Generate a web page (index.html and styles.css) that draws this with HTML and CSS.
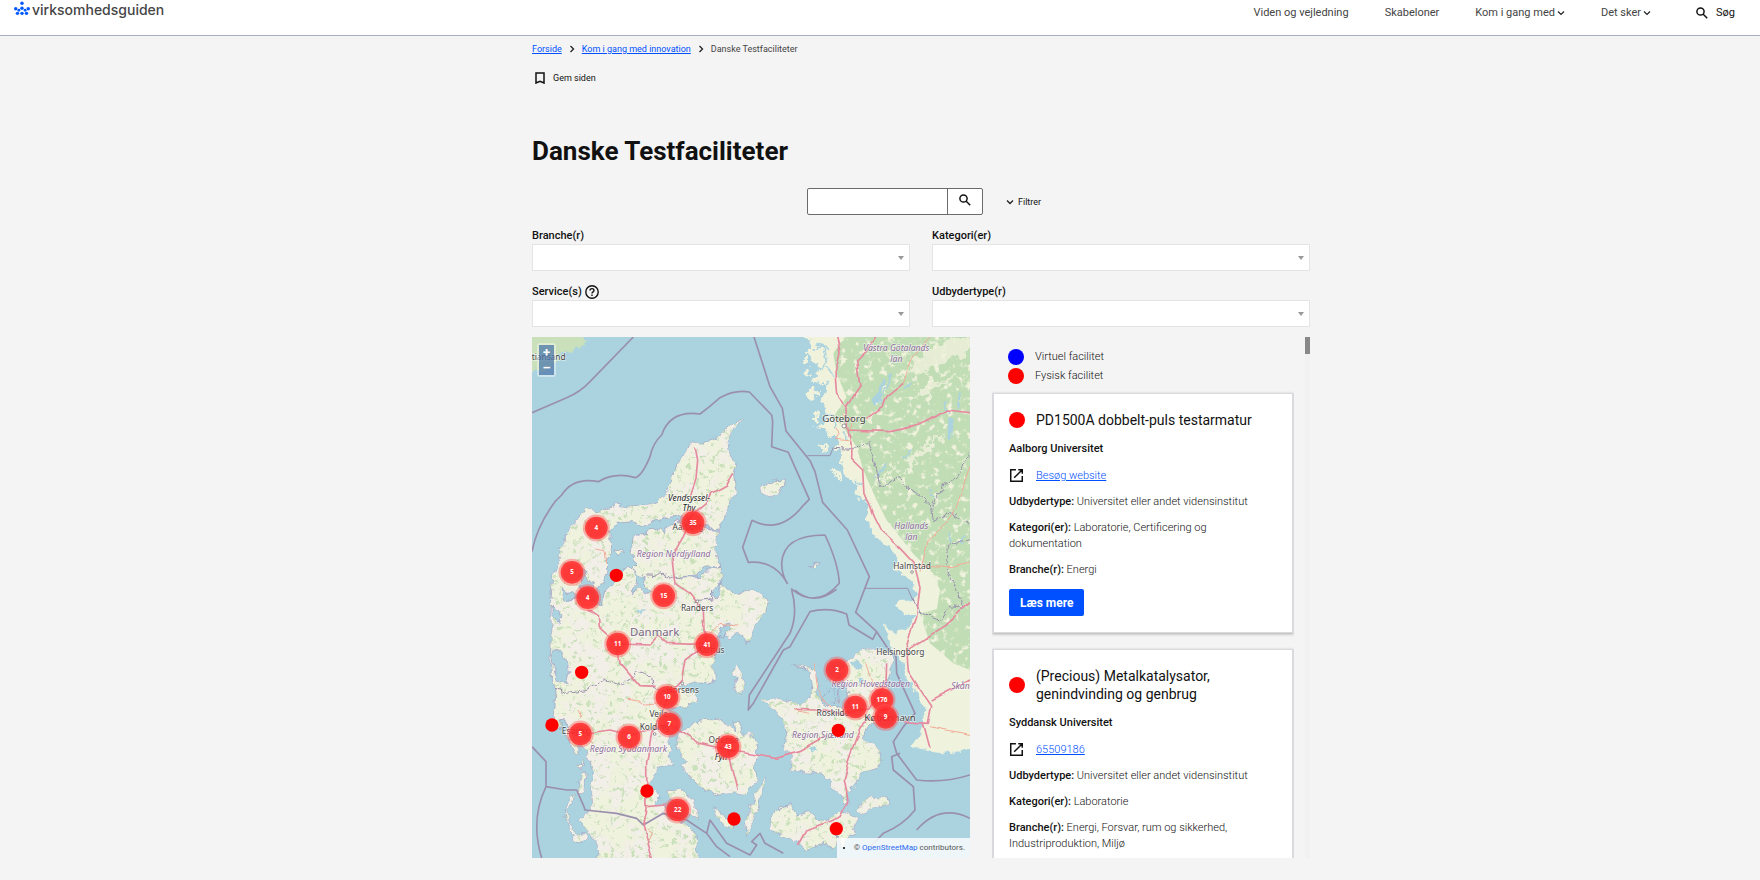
FILE: index.html
```html
<!DOCTYPE html>
<html lang="da">
<head>
<meta charset="utf-8">
<meta name="viewport" content="width=device-width, initial-scale=1">
<title>Danske Testfaciliteter</title>
<link rel="stylesheet" href="styles.css">
</head>
<body>
<header class="site-header">
  <a class="logo" href="#">
    <svg class="logo-mark" viewBox="0 0 46 42" aria-hidden="true"><circle cx="23" cy="6" r="5"/><circle cx="23" cy="20" r="5"/><circle cx="5" cy="22" r="5"/><circle cx="41" cy="22" r="5"/><circle cx="14" cy="26" r="4"/><circle cx="32" cy="26" r="4"/><circle cx="10" cy="35" r="5"/><circle cx="23" cy="35" r="5"/><circle cx="36" cy="35" r="5"/></svg>
    <span>virksomhedsguiden</span>
  </a>
  <nav class="main-nav">
    <a href="#">Viden og vejledning</a>
    <a href="#">Skabeloner</a>
    <button type="button">Kom i gang med <svg class="chev" viewBox="0 0 8 8"><path d="M1 2.5l3 3 3-3"/></svg></button>
    <button type="button">Det sker <svg class="chev" viewBox="0 0 8 8"><path d="M1 2.5l3 3 3-3"/></svg></button>
    <button type="button" class="nav-search"><svg class="lens" viewBox="0 0 12 12"><circle cx="4.5" cy="4.5" r="3.6"/><path d="M7.2 7.2l4 4"/></svg>Søg</button>
  </nav>
</header>

<main class="page">
  <div class="content">
    <nav class="breadcrumb" aria-label="Brødkrumme">
      <a href="#">Forside</a>
      <svg class="chev" viewBox="0 0 8 8"><path d="M2.5 1l3 3-3 3"/></svg>
      <a href="#">Kom i gang med innovation</a>
      <svg class="chev" viewBox="0 0 8 8"><path d="M2.5 1l3 3-3 3"/></svg>
      <span>Danske Testfaciliteter</span>
    </nav>
    <button type="button" class="save"><svg viewBox="0 0 10 12"><path d="M1 1h8v10L5 9.200 1 11z"/></svg>Gem siden</button>
    <h1>Danske Testfaciliteter</h1>

    <form class="search-row">
      <div class="search-box">
        <input type="search" aria-label="Søg i testfaciliteter">
        <button type="button" aria-label="Søg"><svg class="lens" viewBox="0 0 12 12"><circle cx="4.500" cy="4.500" r="3.600"/><path d="M7.200 7.200l4 4"/></svg></button>
      </div>
      <button type="button" class="filter-toggle"><svg class="chev" viewBox="0 0 8 8"><path d="M1 2.500l3 3 3-3"/></svg>Filtrer</button>
    </form>

    <div class="filters">
      <div class="field"><label for="branche">Branche(r)</label><div class="select"><select id="branche"><option></option></select></div></div>
      <div class="field"><label for="kategori">Kategori(er)</label><div class="select"><select id="kategori"><option></option></select></div></div>
      <div class="field"><label for="service">Service(s) <svg class="help" viewBox="0 0 14 14"><circle cx="7" cy="7" r="6.200"/><path d="M5 5.600C5 4.200 6 3.600 7 3.600s2 .7 2 1.800C9 6.900 7 6.900 7 8.500M7 9.600v1.300"/></svg></label><div class="select"><select id="service"><option></option></select></div></div>
      <div class="field"><label for="udbyder">Udbydertype(r)</label><div class="select"><select id="udbyder"><option></option></select></div></div>
    </div>

    <div class="results">
      <section class="map" aria-label="Kort">
        <svg class="map-canvas" viewBox="36 21 1314 1563" preserveAspectRatio="xMidYMid slice">
          <defs>
            <filter id="woods" x="0" y="0" width="100%" height="100%" color-interpolation-filters="sRGB">
              <feTurbulence type="fractalNoise" baseFrequency=".05" numOctaves="5" seed="8"/>
              <feColorMatrix values="0 0 0 0 .757  0 0 0 0 .867  0 0 0 0 .71  6 0 0 0 -1.600" result="n"/>
              <feComposite in="n" in2="SourceGraphic" operator="in"/>
            </filter>
            <filter id="fields" x="0" y="0" width="100%" height="100%" color-interpolation-filters="sRGB">
              <feTurbulence type="fractalNoise" baseFrequency=".07" numOctaves="4" seed="21"/>
              <feColorMatrix values="0 0 0 0 .79  0 0 0 0 .88  0 0 0 0 .73  8 0 0 0 -4.700" result="n"/>
              <feComposite in="n" in2="SourceGraphic" operator="in"/>
            </filter>
            <filter id="soil" x="0" y="0" width="100%" height="100%" color-interpolation-filters="sRGB">
              <feTurbulence type="fractalNoise" baseFrequency=".015" numOctaves="4" seed="4"/>
              <feColorMatrix values="0 0 0 0 .949  0 0 0 0 .933  0 0 0 0 .91  0 5 0 0 -2.200" result="n"/>
              <feComposite in="n" in2="SourceGraphic" operator="in"/>
            </filter>
            <filter id="coast" filterUnits="userSpaceOnUse" x="-20" y="-20" width="1420" height="1660" color-interpolation-filters="sRGB">
              <feTurbulence type="fractalNoise" baseFrequency=".04" numOctaves="3" seed="3"/>
              <feDisplacementMap in="SourceGraphic" scale="24" xChannelSelector="R" yChannelSelector="G"/>
            </filter>
            <filter id="wander" filterUnits="userSpaceOnUse" x="-20" y="-20" width="1420" height="1660" color-interpolation-filters="sRGB">
              <feTurbulence type="fractalNoise" baseFrequency=".02" numOctaves="1" seed="3"/>
              <feDisplacementMap in="SourceGraphic" scale="20" xChannelSelector="R" yChannelSelector="G"/>
            </filter>
            <filter id="skerries" filterUnits="userSpaceOnUse" x="-20" y="-20" width="1420" height="1660" color-interpolation-filters="sRGB">
              <feTurbulence type="fractalNoise" baseFrequency=".035" numOctaves="4" seed="11"/>
              <feDisplacementMap in="SourceGraphic" scale="60" xChannelSelector="R" yChannelSelector="G"/>
            </filter>
            <path id="denmark" d="M672 268L650 290 632 308 622 340 630 375 650 402 641 430 645 470 648 495 625 530 610 570 600 597 587 620 585 650 592 690 604 710 604 740 600 755 620 780 660 790 700 782 725 790 740 820 738 850 708 880 695 910 684 944 668 915 652 910 630 925 605 915 612 900 638 886 622 884 600 900 585 920 574 950 586 975 581 1010 582 1050 545 1062 500 1063 478 1073 528 1088 532 1110 500 1130 460 1136 420 1125 452 1150 475 1180 470 1200 448 1215 445 1230 456 1258 440 1285 458 1302 420 1315 400 1340 385 1370 402 1378 420 1400 405 1420 435 1430 430 1455 470 1470 505 1480 522 1505 532 1530 530 1590 228 1590 240 1560 200 1500 178 1470 200 1450 215 1430 213 1380 220 1320 205 1280 190 1255 168 1235 175 1272 160 1265 150 1240 140 1210 128 1172 112 1195 95 1180 105 1130 108 1080 94 1040 92 960 96 900 92 840 95 780 98 740 116 690 125 645 140 610 170 570 200 535 232 546 290 524 340 531 400 520 430 497 460 440 478 388 506 348 515 336 550 340 590 320 630 290zM475 1215L490 1200 540 1170 590 1165 622 1180 650 1212 638 1175 662 1180 666 1222 690 1210 712 1240 704 1300 710 1350 680 1392 640 1388 590 1396 540 1370 508 1340 486 1312 502 1292 470 1260zM445 1380L475 1377 507 1400 532 1440 536 1465 500 1450 480 1430 448 1403zM578 1432L620 1462 645 1494 600 1472zM740 1345L724 1394 702 1460 680 1518 675 1480 698 1420 712 1376zM650 1005L666 1030 672 1070 655 1098 645 1080 652 1040 641 1020zM725 1110L770 1105 810 1116 862 1122 876 1085 872 1030 815 1003 882 1020 895 1050 890 1090 918 1128 950 1120 960 1072 925 1050 950 1022 990 990 1030 957 1060 955 1110 970 1120 992 1102 1040 1106 1090 1120 1130 1106 1155 1070 1170 1045 1190 1026 1222 1060 1240 1085 1275 1076 1310 1030 1325 1012 1348 1000 1372 980 1385 986 1425 972 1422 970 1400 940 1380 930 1350 900 1328 860 1325 812 1320 815 1280 790 1250 800 1210 790 1170 752 1130zM1010 1440L1050 1398 1062 1412 1100 1400 1106 1424 1062 1430 1024 1455zM920 1480L960 1440 986 1455 1016 1466 990 1520 962 1556 950 1510zM755 1460L780 1430 812 1424 835 1455 870 1445 890 1472 930 1470 952 1520 945 1550 900 1545 860 1562 820 1530 770 1510 748 1492zM720 475L745 455 795 450 797 464 772 482 757 503 730 486zM868 710L902 699 885 718zM150 1400L165 1395 140 1440 150 1490 170 1510 185 1530 150 1500 132 1450zM160 1515L195 1508 203 1525 180 1540 158 1530zM180 1330L196 1325 190 1380 175 1388zM172 1310L192 1290 185 1315z"/>
            <path id="sweden-north" d="M1400 0L850 0 875 50 850 85 895 110 885 150 920 170 898 212 925 240 905 290 935 320 960 352 970 430 990 440 1010 480 1035 520 1045 570 1065 620 1400 620z"/>
            <path id="sweden-south" d="M1400 560L1047 575 1065 620 1110 650 1132 680 1125 720 1170 745 1192 800 1180 815 1142 815 1125 828 1150 850 1190 862 1160 890 1130 912 1087 880 1105 930 1125 970 1150 995 1160 1040 1190 1090 1216 1135 1208 1180 1195 1225 1168 1250 1230 1262 1300 1272 1400 1240z"/>
          </defs>
          <rect width="1500" height="1700" fill="#aad3df"/>
          <g filter="url(#skerries)">
            <use href="#sweden-north" fill="#f0f2dc"/>
            <path fill="#c9e0bb" d="M0 0h215l-28 36-50 36-42 40-95 30z"/>
            <path fill="#f0f2dc" d="M858 120l14-8 6 20-12 8zM868 180l16-5 2 22-14 4zM880 255l14 0 4 26-14 0zM905 340l14 4 2 20-14 0zM940 420l12 0 2 22-12 0z"/>
          </g>
          <g filter="url(#coast)">
            <g fill="#eff2dd" stroke="#9d9ac0" stroke-width="2">
              <use href="#denmark"/>
              <use href="#sweden-south" stroke="none"/>
            </g>
            <use href="#denmark" filter="url(#soil)"/>
            <use href="#denmark" filter="url(#fields)"/>
            <!-- fjords and lakes -->
            <g fill="#aad3df" stroke="#9d9ac0" stroke-width="2">
              <path d="M272 600l20-20 45-5 25 15 30-15 55-10 25-8 20 10 25 5 25 10 30 15 32-4-12 8-28-2-50-20-45-5-25 10-8 30-12-20-35 2-20 18-28 2-8 45 12 12 5 30-15 15 20 20 20 10-5 20 20 20-15 10-20-25-25 20 20-40-10-30-15-10-25 10-15 30-30 25-10 50-35-20-45-5-30 10-8-45 15 25 40-5-5-50 10-15 15 0-8 20 25 15 0 25 30-25 15-40-5-35 15-15 0-20z"/>
              <path d="M478 742l50-8 25-22 50-3-45 12-20 18zM575 790l30-35-15 55zM97 960l25 5 15 30 12 30-15 35-22-10-15-45zM120 1170l15 3 5 30-20-5zM96 825l15 15 15 20-8 15-22-25zM602 890l30-8 5 15-20 10-5 20-15-5z"/>
              <path d="M905 1105l15-25 25-10 0 25-10 25 20 0 5-60-15-5 8-30 20 30 10 30 8 35-20 15-40-5z"/>
              <path stroke="none" d="M995 1000l15-8 15 15-15 12zM350 840l20-3-10 12zM870 1255l12-8 8 12-12 10zM1020 1040l14 12-18 8z"/>
            </g>
            <g fill="#eff2dd" stroke="#9d9ac0" stroke-width="2"><path d="M285 660l25-6 3 12-20 8z"/></g>
          </g>
          <g filter="url(#woods)"><path d="M1350 21H970l-30 50 10 60 30 70-40 60 30 30 40 60 20 70 40 90 30 60 80 100 60 60 20 50-10 60 60 60 110 40z"/><path d="M1200 850l80-20 70 10v180l-50-20-70-60z"/></g>
          <path filter="url(#skerries)" d="M1240 40l120-30v50l-170 70-50 20zM1360 125l-110 45-90 45 60-50zM1290 300l-80 70-70 80 40-80zM1120 410l-20 70-15-20z" fill="#f0f2dc" opacity=".8"/>
          <g filter="url(#coast)" stroke="#aad3df" stroke-width="5" fill="none"><path d="M875 60l30-10 20 40-20 30M905 170l25-20M900 260l35-5 10 40M890 40l40 20M920 110l25 30M1120 130l-30 60M1150 180l25-20M1320 190l-8 50M1270 215l20 40M1060 450l40-50M1230 480l15 20M970 300l12 30M1010 500l30 10M1010 450l20 20M1290 610v30M1325 610l5 35M1150 380l25-15"/><path stroke-width="12" d="M1090 150l-15 50-15 25M1295 270l-5 60M1060 215l30-5"/></g>

          <!-- maritime and administrative borders -->
          <g fill="none" stroke="#9a90ae" stroke-width="5" stroke-linejoin="round">
            <path d="M340 21L210 155Q180 187 140 203L36 248M36 665Q50 590 105 515L125 495Q160 440 235 455 285 425 345 443 365 440 390 380 398 340 425 315 450 240 540 252 570 230 600 203 645 178 688 186L755 255 758 275 755 350 805 367 868 508 850 526Q780 615 696 571L668 652 685 697Q765 690 803 762M702 21L750 170 787 235 798 303 870 392 885 425 908 517 982 600 1048 740 1007 847 1070 905 1058 928 987 885 980 852Q925 830 870 845L810 950 790 960 700 1120 685 1140 688 1095 810 910Q835 850 815 780M915 615Q790 615 785 700 785 735 803 762M915 615Q955 700 958 760 890 840 813 776M825 780Q880 830 950 778M1070 905L1100 950 1128 980 1130 1030 1185 1150 1150 1190 1120 1235 1130 1270 1190 1350Q1270 1360 1350 1335M1140 1270L1115 1280 1120 1320 1180 1370 1185 1440Q1150 1485 1090 1510L1040 1560M1350 1465Q1260 1420 1190 1500"/>
            <path d="M36 1250L78 1295V1370L140 1380 170 1380 192 1430 195 1440 290 1450 350 1465 370 1485 430 1450 500 1470 560 1510 590 1550 630 1580M78 1370Q30 1470 65 1584M560 1510L570 1470 620 1540 690 1575 710 1545 695 1535 720 1510 735 1540 790 1570"/>
            <path filter="url(#coast)" stroke-width="3" d="M105 1075L150 1090 200 1080 250 1050 310 1070 345 1025 395 1040 400 1070 440 1090M365 735L400 740 420 725 450 745 480 745M520 815L575 810V780M940 352L1000 355 1045 338 1060 370 1080 470 1130 445 1190 490 1235 530 1240 575 1290 545 1350 585M1235 530L1260 480 1310 440 1350 370M1178 810L1200 850 1260 870 1290 830 1330 835 1315 790 1280 715 1285 645 1350 632"/>
            <path stroke-width="3" d="M862 377H930L940 352M1035 775H1163L1178 810"/>
          </g>
          <!-- roads -->
          <g filter="url(#wander)" fill="none" stroke="#e58a9f" stroke-width="5" stroke-linejoin="round">
            <path d="M525 350L533 390 528 445 510 500M641 430L620 465 575 490 560 520 519 555 490 620 455 680 465 760 510 790 550 840 552 900 560 940 495 990 485 1050 440 1100 430 1150 395 1210 380 1300 381 1440 370 1490 400 1600M203 840L232 860 235 890 293 942 390 945 415 920 440 940 560 944M293 950L300 1000 360 1070 410 1072M181 1212L270 1200 330 1215 400 1200 448 1182 540 1240 624 1260 710 1275 765 1285 840 1265 920 1220M624 1260L655 1380M381 1430L440 1425"/>
            <path d="M948 1L960 70 945 130 950 190 981 228 982 290 993 340 992 385 1028 420 1032 490 1060 560 1080 600 1140 655 1182 700 1200 770 1190 860 1160 960 1165 1020 1210 1090 1235 1125 1225 1180 1150 1175M981 228L1020 170 1010 90 1040 60 1080 1M1040 265L1090 230 1100 200 1150 160M985 300L1110 305 1180 290 1230 270 1280 240 1370 250M1160 965L1270 890 1370 800M1235 1110L1370 1040M1210 1180L1230 1255M820 1138L890 1140 960 1150 1050 1140 1098 1060 1100 1000M1050 1160L1020 1190 985 1290 970 1350 982 1420 960 1460 860 1500 835 1545"/>
            <path stroke="#f2ab96" stroke-width="3" d="M1150 160L1180 80 1250 1M1200 725L1225 630 1290 570 1370 360M1200 705L1290 710 1370 693M320 1105L360 1110 380 1125 420 1120M180 1140L188 1165M550 930L600 880 655 885M880 1000L890 1080 930 1135M1040 1000L1060 1060 1080 1110M1230 1190L1370 1218M225 660L255 665 260 700M945 290L960 310 950 325 990 330M820 1140L870 1150M181 1212L220 1240M380 1500l15 10-10 20M970 250l30 20-10 30"/>
          </g>
          <g class="place">
            <text x="86" y="90">tiansand</text><text x="972" y="277" class="l">Göteborg</text><text x="1176" y="716">Halmstad</text><text x="504" y="600">Aalborg</text><text x="531" y="843">Randers</text><text x="404" y="917" class="xl">Danmark</text><text x="572" y="970">Aarhus</text><text x="488" y="1088">Horsens</text><text x="416" y="1161">Vejle</text><text x="404" y="1201">Kolding</text><text x="169" y="1211">Esbjerg</text><text x="611" y="1238">Odense</text><text x="1141" y="976">Helsingborg</text><text x="939" y="1159">Roskilde</text><text x="1110" y="1172" class="l">København</text>
          </g>
          <g class="region">
            <text x="1129" y="63">Västra Götalands</text><text x="1129" y="96">län</text><text x="1174" y="597">Hallands</text><text x="1174" y="630">län</text><text x="461" y="681">Region Nordjylland</text><text x="325" y="1266">Region Syddanmark</text><text x="1052" y="1071">Region Hovedstaden</text><text x="909" y="1225">Region Sjælland</text><text x="1328" y="1077">Skåne</text>
            <g class="dark"><text x="507" y="513">Vendsyssel-</text><text x="507" y="543">Thy</text><text x="603" y="1289">Fyn</text></g>
          </g>
          <g fill="#fff" stroke="#666" stroke-width="2"><circle cx="972" cy="288" r="6"/><circle cx="1176" cy="726" r="4"/><circle cx="532" cy="814" r="4"/><circle cx="487" cy="1060" r="4"/><circle cx="404" cy="1212" r="4"/></g>
          <g class="cluster">
            <g transform="translate(229 594)"><circle r="34"/><text y="6">4</text></g>
            <g transform="translate(519 578)"><circle r="34"/><text y="6">35</text></g>
            <g transform="translate(156 727)"><circle r="34"/><text y="6">5</text></g>
            <g transform="translate(203 803)"><circle r="34"/><text y="6">4</text></g>
            <g transform="translate(431 797)"><circle r="34"/><text y="6">15</text></g>
            <g transform="translate(293 942)"><circle r="34"/><text y="6">11</text></g>
            <g transform="translate(561 944)"><circle r="34"/><text y="6">41</text></g>
            <g transform="translate(441 1102)"><circle r="34"/><text y="6">10</text></g>
            <g transform="translate(448 1182)"><circle r="34"/><text y="6">7</text></g>
            <g transform="translate(181 1212)"><circle r="34"/><text y="6">5</text></g>
            <g transform="translate(327 1221)"><circle r="34"/><text y="6">6</text></g>
            <g transform="translate(624 1250)"><circle r="34"/><text y="6">43</text></g>
            <g transform="translate(473 1440)"><circle r="34"/><text y="6">22</text></g>
            <g transform="translate(951 1020)"><circle r="34"/><text y="6">2</text></g>
            <g transform="translate(1086 1109)"><circle r="34"/><text y="6">176</text></g>
            <g transform="translate(1006 1131)"><circle r="34"/><text y="6">11</text></g>
            <g transform="translate(1097 1162)"><circle r="34"/><text y="6">9</text></g>
          </g>
          <g fill="red"><circle cx="289" cy="736" r="20"/><circle cx="185" cy="1027" r="20"/><circle cx="96" cy="1185" r="20"/><circle cx="381" cy="1383" r="20"/><circle cx="642" cy="1467" r="20"/><circle cx="955" cy="1201" r="20"/><circle cx="949" cy="1496" r="20"/></g>
        </svg>
        <div class="zoom"><button type="button" aria-label="Zoom ind">+</button><button type="button" aria-label="Zoom ud">–</button></div>
        <ul class="attribution"><li>© <a href="#">OpenStreetMap</a> contributors.</li></ul>
      </section>

      <section class="list" aria-label="Faciliteter">
        <div class="list-items">
          <ul class="legend">
            <li><span class="dot virtual"></span>Virtuel facilitet</li>
            <li><span class="dot"></span>Fysisk facilitet</li>
          </ul>
          <article class="card">
            <h2><span class="dot"></span><span>PD1500A dobbelt-puls testarmatur</span></h2>
            <p><strong>Aalborg Universitet</strong></p>
            <p class="website"><svg viewBox="0 0 13 13"><path d="M6 1.500H1.500v10h10V7M8 1.500h3.500V5M11.500 1.500l-7 7"/></svg><a href="#">Besøg website</a></p>
            <p><strong>Udbydertype:</strong> Universitet eller andet vidensinstitut</p>
            <p><strong>Kategori(er):</strong> Laboratorie, Certificering og dokumentation</p>
            <p><strong>Branche(r):</strong> Energi</p>
            <button type="button" class="primary">Læs mere</button>
          </article>
          <article class="card">
            <h2><span class="dot"></span><span>(Precious) Metalkatalysator, genindvinding og genbrug</span></h2>
            <p><strong>Syddansk Universitet</strong></p>
            <p class="website"><svg viewBox="0 0 13 13"><path d="M6 1.500H1.500v10h10V7M8 1.500h3.500V5M11.500 1.500l-7 7"/></svg><a href="#">65509186</a></p>
            <p><strong>Udbydertype:</strong> Universitet eller andet vidensinstitut</p>
            <p><strong>Kategori(er):</strong> Laboratorie</p>
            <p><strong>Branche(r):</strong> Energi, Forsvar, rum og sikkerhed, Industriproduktion, Miljø</p>
          </article>
        </div>
        <div class="scrollbar"><div class="thumb"></div></div>
      </section>
    </div>
  </div>
</main>
</body>
</html>
```
FILE: styles.css
```css
* { box-sizing: border-box; }
body { margin: 0; background: #f4f4f4; color: #111; font: 300 11px/16px Roboto, "Liberation Sans", sans-serif; }
button, input, select { font: inherit; color: inherit; }
button { padding: 0; border: 0; background: none; cursor: pointer; }
a { color: #0050ff; }
strong { font-weight: 500; }
svg { flex: none; }

.site-header { display: flex; justify-content: space-between; align-items: flex-start; height: 36px; padding: 0 25px 0 14px; background: #fff; border-bottom: 1px solid #a5b0c4; }
.logo { display: flex; gap: 2px; color: #454545; font-family: Inter, "Noto Sans", sans-serif; font-size: 14px; line-height: 20px; font-weight: 500; text-decoration: none; }
.logo-mark { width: 16px; height: 15px; margin-top: 1px; fill: #0059ff; }
.main-nav { display: flex; padding-top: 5px; gap: 36px; font-weight: 400; color: #444; }
.main-nav a { color: inherit; text-decoration: none; }
.main-nav button { display: flex; align-items: center; gap: 2px; }
.main-nav .nav-search { gap: 8px; margin-left: 9px; color: #111; }
.main-nav .chev { stroke-width: 1.200; }
.chev { width: 8px; height: 8px; fill: none; stroke: #222; stroke-width: 1.300; }
.lens { width: 12px; height: 12px; fill: none; stroke: #111; stroke-width: 1.500; }

.page { display: grid; grid-template-columns: 532fr 778fr 450fr; }
.content { grid-column: 2; min-width: 0; }
.breadcrumb { display: flex; align-items: center; gap: 6px; padding-top: 5px; font-size: 9px; font-weight: 400; }
.breadcrumb span { color: #444; }
.save { display: flex; align-items: center; gap: 8px; margin: 13px 0 0 3px; font-size: 9px; font-weight: 400; }
.save svg { width: 10px; height: 12px; fill: none; stroke: #111; stroke-width: 1.500; }
h1 { margin: 48px 0 0; font-size: 26px; line-height: 34px; font-weight: 700; }

.search-row { display: flex; align-items: center; gap: 23px; margin: 20px 0 0 275px; }
.search-box { display: flex; width: 176px; height: 27px; border: 1px solid #6b6b6b; border-radius: 2px; background: #fff; overflow: hidden; }
.search-box input { flex: 1; min-width: 0; border: 0; background: none; outline: 0; }
.search-box button { display: flex; align-items: center; justify-content: center; width: 35px; padding-bottom: 3px; border-left: 1px solid #6b6b6b; }
.filter-toggle { display: flex; align-items: center; gap: 4px; font-size: 9px; font-weight: 400; }

.filters { display: grid; grid-template-columns: 1fr 1fr; gap: 12px 22px; margin-top: 12px; }
.field label { display: flex; align-items: center; gap: 3px; height: 17px; font-weight: 500; }
.help { width: 14px; height: 14px; fill: none; stroke: #111; stroke-width: 1.400; }
.select { position: relative; }
.select select { display: block; width: 100%; height: 27px; appearance: none; background: #fff; border: 1px solid #e4e4e4; border-radius: 0; }
.select::after { content: ""; position: absolute; right: 6px; top: 12px; border: 3px solid transparent; border-top: 4px solid #999; border-bottom: 0; pointer-events: none; }

.results { display: grid; grid-template-columns: 438fr 340fr; height: 521px; margin-top: 10px; }
.map { position: relative; min-width: 0; overflow: hidden; }
.map-canvas { display: block; width: 100%; height: 521px; }
.map-canvas text { font-family: "Noto Sans", "Open Sans", sans-serif; text-anchor: middle; }
.place text { font-size: 25px; font-weight: 400; fill: #444; stroke: #fff; stroke-opacity: .6; stroke-width: 4px; paint-order: stroke; }
.place .l { font-size: 29px; }
.place .xl { font-size: 34px; fill: #7a6584; }
.region text { font-size: 26px; font-style: italic; font-weight: 400; fill: #8d6b9b; stroke: #fff; stroke-opacity: .6; stroke-width: 4px; paint-order: stroke; }
.region .dark text { font-size: 25px; fill: #222; }
.cluster circle { fill: #ff2626; fill-opacity: .9; stroke: #ff5050; stroke-opacity: .4; stroke-width: 13px; }
.cluster text { font-size: 19px; font-weight: 700; fill: #fff; }
.zoom { position: absolute; left: 5px; top: 6px; display: grid; padding: 2px; background: rgba(255,255,255,.4); border-radius: 3px; }
.zoom button { width: 15px; height: 15px; background: rgba(0,60,136,.5); color: #fff; font-size: 13px; line-height: 13px; font-weight: 700; }
.attribution { position: absolute; right: 0; bottom: 0; margin: 0; padding: 2px 5px 2px 17px; background: rgba(255,255,255,.8); color: #555; font: 400 8px/16px Roboto, sans-serif; }
.attribution li::marker { color: #000; }
.attribution a { color: #2b6bf3; text-decoration: none; }

.list { display: grid; grid-template-columns: 1fr 5px; gap: 11px; padding-left: 22px; min-width: 0; height: 521px; overflow: hidden; }
.list-items { min-width: 0; height: 521px; overflow: hidden; }
.scrollbar { background: #f1f1f1; }
.thumb { height: 17px; background: #888; }
.legend { list-style: none; margin: 0; padding: 10px 16px 8px; }
.legend li { display: flex; align-items: center; gap: 11px; height: 19px; }
.dot { flex: none; width: 16px; height: 16px; border-radius: 50%; background: red; }
.dot.virtual { background: blue; }
.card { margin-bottom: 16px; padding: 17px 15px 16px; background: #fff; border: 2px solid #d8dade; border-width: 1px 2px; box-shadow: 0 1px 3px rgba(0,0,0,.3); }
.card h2 { display: flex; align-items: center; gap: 11px; margin: 0 0 12px; font-size: 14px; line-height: 18px; font-weight: 400; }
.card p { margin: 0 0 10px; }
.card p:not(.website) { padding-right: 18px; }
.website { display: flex; align-items: center; gap: 12px; line-height: 17px; }
.website svg { width: 15px; height: 15px; fill: none; stroke: #111; stroke-width: 1.300; }
.primary { display: block; height: 27px; margin-top: 11px; padding: 0 11px; background: #0050ff; border-radius: 2px; color: #fff; font-weight: 700; font-size: 12px; }
```
